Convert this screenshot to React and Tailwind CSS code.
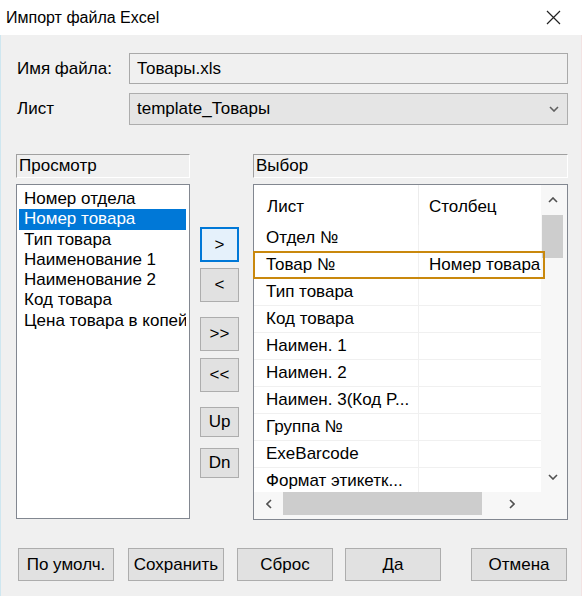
import React from "react";

const PREVIEW = [
  "Номер отдела",
  "Номер товара",
  "Тип товара",
  "Наименование 1",
  "Наименование 2",
  "Код товара",
  "Цена товара в копейках",
];

const ROWS = [
  ["Отдел №", ""],
  ["Товар №", "Номер товара"],
  ["Тип товара", ""],
  ["Код товара", ""],
  ["Наимен. 1", ""],
  ["Наимен. 2", ""],
  ["Наимен. 3(Код P...", ""],
  ["Группа №", ""],
  ["ExeBarcode", ""],
  ["Формат этикетк...", ""],
];

function Chevron({ dir = "down", className = "" }) {
  const d = {
    down: "M1 1 L5 5 L9 1",
    up: "M1 5 L5 1 L9 5",
    left: "M5 1 L1 5 L5 9",
    right: "M1 1 L5 5 L1 9",
  }[dir];
  const vert = dir === "up" || dir === "down";
  return (
    <svg width={vert ? 10 : 6} height={vert ? 6 : 10} viewBox={vert ? "0 0 10 6" : "0 0 6 10"} className={className}>
      <path d={d} fill="none" stroke="currentColor" strokeWidth="1.6" />
    </svg>
  );
}

function SideButton({ children, active, className = "" }) {
  return (
    <button
      type="button"
      className={
        "w-[39px] flex items-center justify-center text-[17px] text-black " +
        (active ? "border-2 border-[#0078d7] bg-[#e5f1fb] " : "border border-[#adadad] bg-[#e1e1e1] ") +
        className
      }
    >
      {children}
    </button>
  );
}

function FootButton({ children, className = "" }) {
  return (
    <button
      type="button"
      className={"h-[33px] w-[96px] border border-[#adadad] bg-[#e1e1e1] text-[17px] text-black " + className}
    >
      {children}
    </button>
  );
}

export default function App() {
  return (
    <div
      className="w-[582px] h-[596px] bg-[#f0f0f0] flex flex-col text-black shadow-[inset_1px_0_0_#cfe7f0,inset_-1px_0_0_#f3e3e3]"
      style={{ fontFamily: '"Liberation Sans", Arial, sans-serif' }}
    >
      {/* title bar */}
      <div className="h-[35px] bg-white flex items-center justify-between pl-[6px] pr-[21px] shrink-0">
        <span className="text-[16px] leading-none">Импорт файла Excel</span>
        <svg width="15" height="15" viewBox="0 0 15 15">
          <path d="M1 1 L14 14 M14 1 L1 14" stroke="#222" strokeWidth="1.2" />
        </svg>
      </div>

      {/* file + sheet */}
      <div className="pt-[18px] pl-[17px] pr-[14px] grid grid-cols-[112px_1fr] gap-y-[9px] items-center text-[17px]">
        <span>Имя файла:</span>
        <div className="h-[31px] border border-[#a9a9a9] bg-[#f0f0f0] flex items-center px-[7px]">Товары.xls</div>
        <span>Лист</span>
        <div className="h-[32px] border border-[#adadad] bg-[#e5e5e5] flex items-center justify-between pl-[7px] pr-[8px]">
          <span>template_Товары</span>
          <Chevron dir="down" className="text-[#606060]" />
        </div>
      </div>

      {/* panels */}
      <div className="mt-[29px] flex items-start pl-[16px] pr-[14px] text-[17px]">
        {/* preview */}
        <div className="w-[174px] flex flex-col">
          <div className="h-[24px] border-t border-l border-[#a0a0a0] border-r-white border-b-white border-r border-b flex items-center px-[2px]">
            Просмотр
          </div>
          <div className="mt-[6px] h-[335px] bg-white border border-[#828790] pt-[4px] overflow-hidden">
            {PREVIEW.map((item, i) => (
              <div
                key={item}
                className={
                  "h-[20.3px] leading-[20px] ml-[2px] mr-[3px] pl-[5px] whitespace-nowrap overflow-hidden " +
                  (i === 1 ? "bg-[#0078d7] text-white" : "")
                }
              >
                {item}
              </div>
            ))}
          </div>
        </div>

        {/* move buttons */}
        <div className="ml-[10px] mt-[73px] flex flex-col">
          <SideButton active className="h-[35px]">&gt;</SideButton>
          <SideButton className="h-[34px] mt-[6px]">&lt;</SideButton>
          <SideButton className="h-[34px] mt-[15px]">&gt;&gt;</SideButton>
          <SideButton className="h-[34px] mt-[7px]">&lt;&lt;</SideButton>
          <SideButton className="h-[30px] mt-[15px]">Up</SideButton>
          <SideButton className="h-[30px] mt-[11px]">Dn</SideButton>
        </div>

        {/* selection grid */}
        <div className="ml-[14px] flex-1 flex flex-col">
          <div className="h-[24px] border-t border-l border-[#a0a0a0] border-r-white border-b-white border-r border-b flex items-center px-[2px]">
            Выбор
          </div>
          <div className="mt-[6px] h-[336px] bg-white border border-[#828790] flex flex-col">
            <div className="flex h-[307px]">
              <div className="w-[287px] flex flex-col">
                <div className="h-[40px] grid grid-cols-[165px_1fr] shrink-0">
                  <div className="pl-[13px] pt-[3px] flex items-center border-r border-[#ececec]">Лист</div>
                  <div className="pl-[10px] pt-[3px] flex items-center">Столбец</div>
                </div>
                {ROWS.map(([sheet, col], i) => (
                  <div
                    key={sheet}
                    className={
                      "relative grid grid-cols-[165px_1fr] shrink-0 " +
                      (i === ROWS.length - 1 ? "h-[24px] overflow-hidden" : "h-[27px] border-b border-[#f0f0f0]")
                    }
                  >
                    <div className="pl-[12px] flex items-center border-r border-[#f0f0f0] whitespace-nowrap">{sheet}</div>
                    <div className="pl-[10px] flex items-center whitespace-nowrap overflow-hidden">{col}</div>
                    {i === 1 && (
                      <span className="absolute -left-[1px] -right-[4px] -top-[1px] -bottom-[1px] border-2 border-[#c9880d]" />
                    )}
                  </div>
                ))}
              </div>
              {/* vertical scrollbar */}
              <div className="flex-1 bg-[#f7f7f7] flex flex-col items-center pl-[1px] pr-[4px]">
                <div className="h-[30px] w-full flex items-center justify-center">
                  <Chevron dir="up" className="text-[#505050]" />
                </div>
                <div className="h-[43px] w-full bg-[#cdcdcd]" />
                <div className="flex-1" />
                <div className="h-[30px] w-full flex items-center justify-center">
                  <Chevron dir="down" className="text-[#505050]" />
                </div>
              </div>
            </div>
            {/* horizontal scrollbar */}
            <div className="flex flex-1">
              <div className="w-[287px] bg-[#f7f7f7] flex items-center pb-[4px]">
                <div className="w-[29px] flex justify-center">
                  <Chevron dir="left" className="text-[#505050]" />
                </div>
                <div className="w-[199px] h-[23px] bg-[#cdcdcd]" />
                <div className="flex-1 flex justify-center">
                  <Chevron dir="right" className="text-[#505050]" />
                </div>
              </div>
              <div className="flex-1 bg-[#f7f7f7]" />
            </div>
          </div>
        </div>
      </div>

      {/* footer */}
      <div className="mt-[28px] flex pl-[18px]">
        <FootButton>По умолч.</FootButton>
        <FootButton className="ml-[14px]">Сохранить</FootButton>
        <FootButton className="ml-[13px]">Сброс</FootButton>
        <FootButton className="ml-[12px]">Да</FootButton>
        <FootButton className="ml-[30px] w-[95px]">Отмена</FootButton>
      </div>
    </div>
  );
}
